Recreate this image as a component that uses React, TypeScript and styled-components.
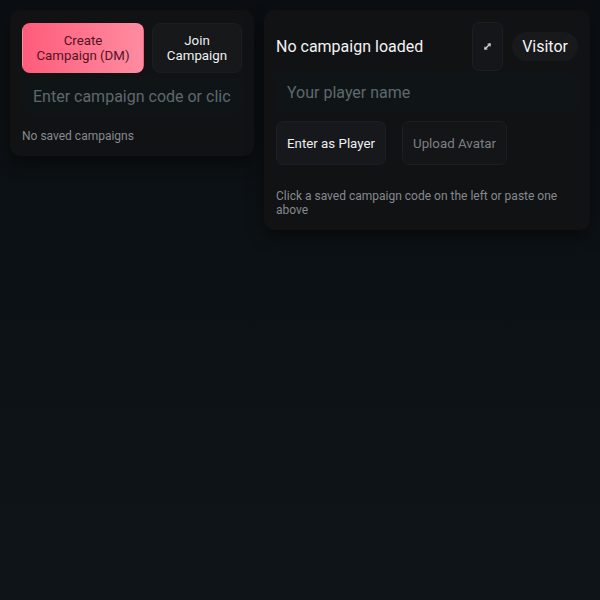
import React from "react";
import styled, { createGlobalStyle } from "styled-components";

const Global = createGlobalStyle`
  html, body { margin: 0; padding: 0; height: 100%; }
  body {
    background: linear-gradient(180deg, #0b0f13 0%, #0e1418 100%);
    font-family: Roboto, "Noto Sans", "Liberation Sans", sans-serif;
    color: #eceef0;
    min-height: 600px;
  }
  #root { min-height: 600px; }
`;

const Page = styled.div`
  display: grid;
  grid-template-columns: 244px 1fr;
  gap: 10px;
  padding: 10px;
  align-items: start;
  box-sizing: border-box;
  width: 600px;
`;

const Panel = styled.section`
  background: #111214;
  border-radius: 10px;
  box-shadow: 0 6px 18px rgba(0, 0, 0, 0.45);
  padding: 12px 12px 13px;
  display: flex;
  flex-direction: column;
`;

const ButtonPair = styled.div`
  display: grid;
  grid-template-columns: 122px 1fr;
  gap: 8px;
  margin-top: 1px;
`;

const BigButton = styled.button<{ $primary?: boolean }>`
  height: 50px;
  border-radius: 8px;
  border: 1px solid ${(p) => (p.$primary ? "transparent" : "#1c1d20")};
  background: ${(p) =>
    p.$primary ? "linear-gradient(90deg, #ff5c7a 0%, #ff8ca1 100%)" : "#17181a"};
  color: ${(p) => (p.$primary ? "#521324" : "#eef0f2")};
  font-family: inherit;
  font-size: 13.3px;
  line-height: 15px;
  padding: 0 12px;
  text-align: center;
`;

const TextInput = styled.input<{ $h: number; $mt: number }>`
  height: ${(p) => p.$h}px;
  margin-top: ${(p) => p.$mt}px;
  box-sizing: border-box;
  width: 100%;
  border: none;
  border-radius: 6px;
  background: #0f1517;
  color: #e6e8ea;
  font-family: inherit;
  font-size: 16px;
  padding: 0 11px;
  outline: none;
  &::placeholder { color: #5f686d; }
`;

const Note = styled.p<{ $mt: number }>`
  margin: ${(p) => p.$mt}px 0 0;
  font-size: 12px;
  line-height: 14px;
  color: #858a8e;
`;

const Header = styled.div`
  display: flex;
  align-items: center;
  gap: 9px;
`;

const Title = styled.h2`
  flex: 1;
  margin: 0;
  font-size: 16px;
  font-weight: 400;
  color: #f2f3f4;
`;

const IconButton = styled.button`
  width: 31px;
  height: 49px;
  border-radius: 7px;
  border: 1px solid #1d1e21;
  background: #151619;
  display: flex;
  align-items: center;
  justify-content: center;
  padding: 0;
`;

const Pill = styled.span`
  height: 29px;
  padding: 0 10px;
  border-radius: 15px;
  background: #17191b;
  font-size: 16px;
  line-height: 29px;
  color: #f2f3f4;
`;

const ActionRow = styled.div`
  display: flex;
  gap: 16px;
  margin-top: 9px;
`;

const ActionButton = styled.button<{ $muted?: boolean }>`
  height: 44px;
  padding: 0 10px;
  border-radius: 7px;
  border: 1px solid #1d1e21;
  background: ${(p) => (p.$muted ? "#141517" : "#17181b")};
  color: ${(p) => (p.$muted ? "#7c8085" : "#eef0f2")};
  font-family: inherit;
  font-size: 13.3px;
`;

const ExpandIcon = () => (
  <svg width="9" height="9" viewBox="0 0 9 9" fill="none" stroke="#d8dadc" strokeWidth="1.2" strokeLinecap="round">
    <path d="M2 7 L7 2" />
    <path d="M5 2 H7 V4" />
    <path d="M2 5 V7 H4" />
  </svg>
);

export default function App() {
  return (
    <>
      <Global />
      <Page>
        <Panel>
          <ButtonPair>
            <BigButton $primary>Create Campaign (DM)</BigButton>
            <BigButton>Join Campaign</BigButton>
          </ButtonPair>
          <TextInput $h={36} $mt={5} placeholder="Enter campaign code or click a saved one" />
          <Note $mt={15}>No saved campaigns</Note>
        </Panel>
        <Panel>
          <Header>
            <Title>No campaign loaded</Title>
            <IconButton aria-label="Expand">
              <ExpandIcon />
            </IconButton>
            <Pill>Visitor</Pill>
          </Header>
          <TextInput $h={39} $mt={2} placeholder="Your player name" />
          <ActionRow>
            <ActionButton>Enter as Player</ActionButton>
            <ActionButton $muted>Upload Avatar</ActionButton>
          </ActionRow>
          <Note $mt={24}>Click a saved campaign code on the left or paste one above</Note>
        </Panel>
      </Page>
    </>
  );
}
